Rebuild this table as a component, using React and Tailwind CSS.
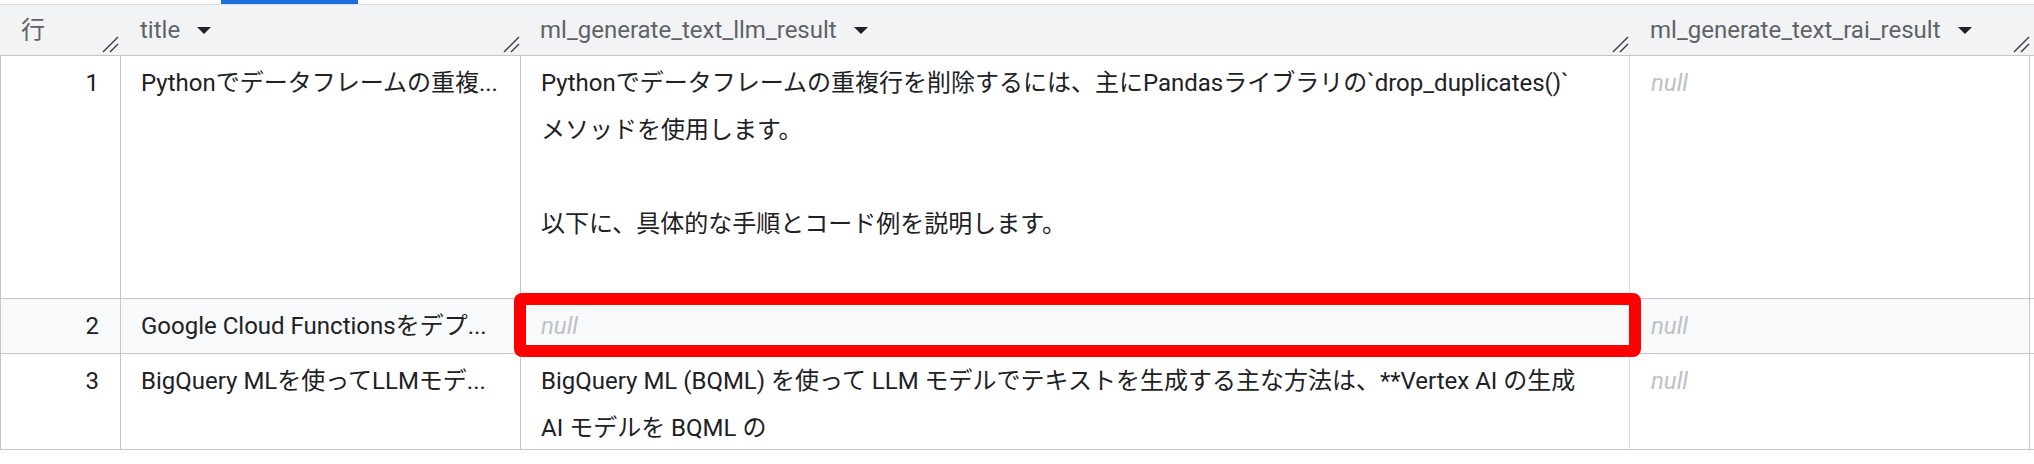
import React from 'react';

const rows = [
  {
    n: 1,
    h: 'h-[243px]',
    bg: 'bg-white',
    title: 'Pythonでデータフレームの重複...',
    llm: [
      'Pythonでデータフレームの重複行を削除するには、主にPandasライブラリの`drop_duplicates()`',
      'メソッドを使用します。',
      '',
      '以下に、具体的な手順とコード例を説明します。',
      '',
    ],
  },
  {
    n: 2,
    h: 'h-[55px]',
    bg: 'bg-[#f8f9fa]',
    title: 'Google Cloud Functionsをデプ...',
    llm: null,
  },
  {
    n: 3,
    h: 'h-[96px]',
    bg: 'bg-white',
    title: 'BigQuery MLを使ってLLMモデ...',
    llm: [
      'BigQuery ML (BQML) を使って LLM モデルでテキストを生成する主な方法は、**Vertex AI の生成',
      'AI モデルを BQML の',
    ],
  },
];

const Grip = () => (
  <svg width="17" height="17" viewBox="0 0 17 17" className="self-end mb-[2px] ml-auto shrink-0">
    <line x1="16" y1="1" x2="1" y2="16" stroke="#3c4043" strokeWidth="1.4" />
    <line x1="16" y1="8" x2="8" y2="16" stroke="#3c4043" strokeWidth="1.4" />
  </svg>
);

const Caret = () => (
  <svg width="14" height="7" viewBox="0 0 14 7" className="ml-[17px] shrink-0">
    <polygon points="0,0 14,0 7,7" fill="#202124" />
  </svg>
);

const Null = () => <span className="italic text-[#bdc1c6]">null</span>;

export default function App() {
  return (
    <div className="relative w-[2034px] h-[464px] overflow-hidden bg-white font-['Roboto','Noto_Sans_CJK_JP',sans-serif] text-[24px] text-[#202124]">
      {/* tab strip */}
      <div className="h-[4px] flex">
        <div className="w-[221px]" />
        <div className="w-[137px] bg-[#1a6fdc]" />
      </div>
      <div className="h-px bg-[#dadce0]" />

      {/* header */}
      <div className="flex h-[51px] bg-[#f1f3f4] border-b border-[#c4c7c5] text-[#5f6368]">
        <div className="w-[121px] flex items-center pl-[21px] pr-[2px]">
          <span>行</span>
          <Grip />
        </div>
        <div className="w-[400px] flex items-center pl-[19px] pr-[1px]">
          <span>title</span>
          <Caret />
          <Grip />
        </div>
        <div className="w-[1109px] flex items-center pl-[19px] pr-[1px]">
          <span>ml_generate_text_llm_result</span>
          <Caret />
          <Grip />
        </div>
        <div className="w-[400px] flex items-center pl-[20px]">
          <span>ml_generate_text_rai_result</span>
          <Caret />
          <Grip />
        </div>
      </div>

      {/* body */}
      {rows.map((r) => (
        <div key={r.n} className={`flex ${r.h} border-b border-[#c4c7c5]`}>
          <div className={`flex w-[2030px] border-l border-[#c4c7c5] ${r.bg}`}>
            <div className="w-[120px] border-r border-[#c4c7c5] pr-[21px] pt-[4px] text-right leading-[47px]">
              {r.n}
            </div>
            <div className="w-[400px] border-r border-[#c4c7c5] pl-[20px] pt-[4px] leading-[47px] whitespace-nowrap overflow-hidden">
              {r.title}
            </div>
            <div className="w-[1109px] border-r border-[#dadce0] pl-[20px] pt-[4px] leading-[47px] whitespace-nowrap overflow-hidden">
              {r.llm ? (
                r.llm.map((line, i) => <div key={i}>{line || '\u00a0'}</div>)
              ) : (
                <Null />
              )}
            </div>
            <div className="w-[400px] border-r border-[#c4c7c5] pl-[21px] pt-[4px] leading-[47px]">
              <Null />
            </div>
          </div>
        </div>
      ))}

      {/* highlight annotation */}
      <div className="absolute left-[514px] top-[293px] w-[1127px] h-[64px] border-[12px] border-[#ff0000] rounded-[8px]" />
    </div>
  );
}
